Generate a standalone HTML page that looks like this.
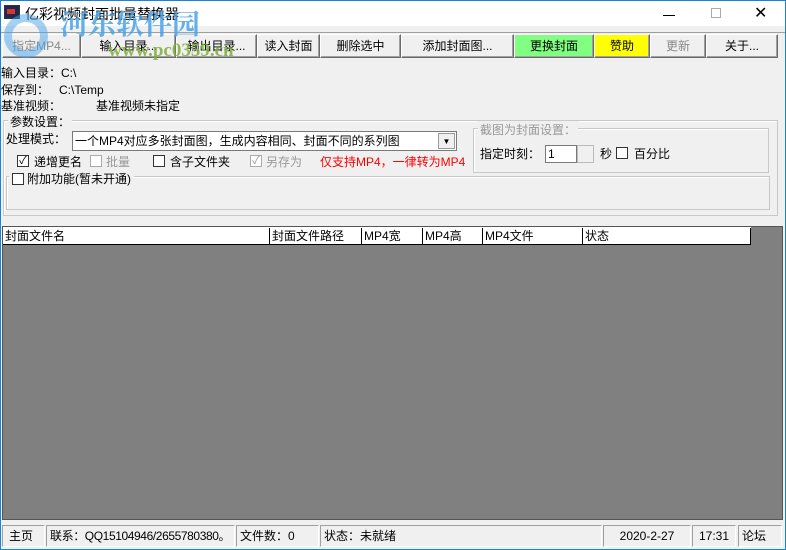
<!DOCTYPE html>
<html><head><meta charset="utf-8"><style>
*{margin:0;padding:0;box-sizing:border-box}
html,body{width:786px;height:550px;overflow:hidden}
body{background:#f0f0f0;font-family:"Liberation Sans","Noto Sans CJK SC",sans-serif;font-size:12px;color:#000;position:relative}
.a{position:absolute;white-space:nowrap}
.btn{position:absolute;top:34px;height:24px;background:#f0f0f0;border:1px solid;border-color:#fff #6a6a6a #6a6a6a #fff;box-shadow:inset -1px -1px 0 #a0a0a0;text-align:center;line-height:22px;font-size:12px}
.chk{position:absolute;width:12px;height:12px;border:1px solid #333;background:#fff;font-size:11px;line-height:10px;text-align:center}
.grp{position:absolute;border:1px solid #c8c8c8;box-shadow:1px 1px 0 #fff inset}
.sb{position:absolute;top:525px;height:22px;border:1px solid;border-color:#a0a0a0 #fff #fff #a0a0a0;line-height:20px;font-size:12px;padding-left:3px;white-space:nowrap;overflow:hidden}
.hd{position:absolute;top:228px;height:16px;border-right:1px solid #000;line-height:16px;font-size:12px;padding-left:2px;background:#fff}
</style></head><body>
<div class="a" style="left:0;top:0;width:786px;height:550px;border:1px solid #1883d7;pointer-events:none;z-index:9"></div>
<div class="a" style="left:0;top:0;width:786px;height:26px;background:#fff"></div>
<div class="a" style="left:4px;top:5px;width:16px;height:14px;background:#1a2a50;border:1px solid #333"><div style="margin:3px 2px;width:8px;height:5px;background:#d33"></div></div>
<div class="a" style="left:25px;top:4px;font-size:14px">亿彩视频封面批量替换器</div>
<div class="a" style="top:15px;width:12px;height:1px;background:#000;left:663px"></div>
<div class="a" style="left:711px;top:8px;width:10px;height:10px;border:1px solid #aaa"></div>
<div class="a" style="left:754px;top:3px;font-size:16px;font-weight:300">✕</div>
<div class="a" style="left:60px;top:6px;font-size:28px;line-height:34px;font-weight:bold;color:#4aa3e8;opacity:.85;font-family:'Noto Serif CJK SC',serif;z-index:5">河东软件园</div>
<div class="a" style="left:4px;top:14px;width:44px;height:44px;border-radius:50%;border:8px solid #4aa3e8;opacity:.5;z-index:5"></div>
<div class="a" style="left:108px;top:40px;font-size:19px;font-weight:bold;color:#7fae3a;opacity:.85;font-family:'Liberation Serif',serif;z-index:5">www.pc0359.cn</div>
<div class="a" style="left:0;top:32px;width:786px;height:1px;background:#a0a0a0"></div>
<div class="btn" style="left:2px;width:79px;color:#888">指定MP4...</div>
<div class="btn" style="left:81px;width:95px">输入目录...</div>
<div class="btn" style="left:176px;width:81px">输出目录...</div>
<div class="btn" style="left:257px;width:63px">读入封面</div>
<div class="btn" style="left:320px;width:81px">删除选中</div>
<div class="btn" style="left:401px;width:113px">添加封面图...</div>
<div class="btn" style="left:514px;width:80px;background:#80ff80">更换封面</div>
<div class="btn" style="left:594px;width:56px;background:#ffff00">赞助</div>
<div class="btn" style="left:650px;width:56px;color:#888">更新</div>
<div class="btn" style="left:706px;width:72px">关于...</div>
<div class="a" style="left:1px;top:64px">输入目录：C:\</div>
<div class="a" style="left:1px;top:81px">保存到：&nbsp;&nbsp;&nbsp;C:\Temp</div>
<div class="a" style="left:1px;top:97px">基准视频：</div>
<div class="a" style="left:96px;top:97px">基准视频未指定</div>
<div class="grp" style="left:3px;top:120px;width:775px;height:96px"></div>
<div class="a" style="left:8px;top:113px;background:#f0f0f0;padding:0 2px">参数设置：</div>
<div class="a" style="left:6px;top:130px">处理模式：</div>
<div class="a" style="left:72px;top:131px;width:385px;height:20px;background:#fff;border:1px solid #7a7a7a;line-height:18px;padding-left:2px">一个MP4对应多张封面图，生成内容相同、封面不同的系列图</div>
<div class="a" style="left:438px;top:133px;width:17px;height:16px;background:#f0f0f0;border:1px solid #999;font-size:8px;text-align:center;line-height:15px">▼</div>
<div class="chk" style="left:17px;top:155px">✓</div><div class="a" style="left:34px;top:153px">递增更名</div>
<div class="chk" style="left:90px;top:155px;border-color:#aaa"></div><div class="a" style="left:106px;top:153px;color:#999">批量</div>
<div class="chk" style="left:153px;top:155px"></div><div class="a" style="left:170px;top:153px">含子文件夹</div>
<div class="chk" style="left:250px;top:155px;border-color:#aaa;color:#999">✓</div><div class="a" style="left:266px;top:153px;color:#999">另存为</div>
<div class="a" style="left:320px;top:153px;color:#f00">仅支持MP4，一律转为MP4</div>
<div class="grp" style="left:473px;top:128px;width:296px;height:45px"></div>
<div class="a" style="left:478px;top:121px;background:#f0f0f0;color:#999;padding:0 2px">截图为封面设置：</div>
<div class="a" style="left:480px;top:145px">指定时刻：</div>
<div class="a" style="left:545px;top:145px;width:32px;height:18px;background:#fff;border:1px solid #7a7a7a;line-height:16px;padding-left:2px">1</div>
<div class="a" style="left:577px;top:145px;width:17px;height:18px;border:1px solid #bbb;background:#f0f0f0"></div>
<div class="a" style="left:600px;top:145px">秒</div>
<div class="chk" style="left:616px;top:147px"></div><div class="a" style="left:634px;top:145px">百分比</div>
<div class="grp" style="left:6px;top:176px;width:764px;height:34px"></div>
<div class="a" style="left:9px;top:170px;background:#f0f0f0;padding:0 3px 0 18px">附加功能(暂未开通)</div>
<div class="chk" style="left:12px;top:173px"></div>
<div class="a" style="left:2px;top:226px;width:781px;height:294px;background:#808080;border:1px solid #555"></div>
<div class="a" style="left:3px;top:227px;width:748px;height:18px;background:#fff;border-bottom:1px solid #000"></div>
<div class="hd" style="left:3px;width:267px">封面文件名</div>
<div class="hd" style="left:270px;width:92px">封面文件路径</div>
<div class="hd" style="left:362px;width:61px">MP4宽</div>
<div class="hd" style="left:423px;width:60px">MP4高</div>
<div class="hd" style="left:483px;width:100px">MP4文件</div>
<div class="hd" style="left:583px;width:168px">状态</div>
<div class="sb" style="left:2px;width:43px;padding-left:6px">主页</div>
<div class="sb" style="left:46px;width:189px;letter-spacing:-0.4px">联系：QQ15104946/2655780380。</div>
<div class="sb" style="left:236px;width:83px">文件数：0</div>
<div class="sb" style="left:320px;width:282px">状态：未就绪</div>
<div class="sb" style="left:603px;width:88px;text-align:center;padding:0">2020-2-27</div>
<div class="sb" style="left:692px;width:44px;text-align:center;padding:0">17:31</div>
<div class="sb" style="left:738px;width:44px">论坛</div>
</body></html>
